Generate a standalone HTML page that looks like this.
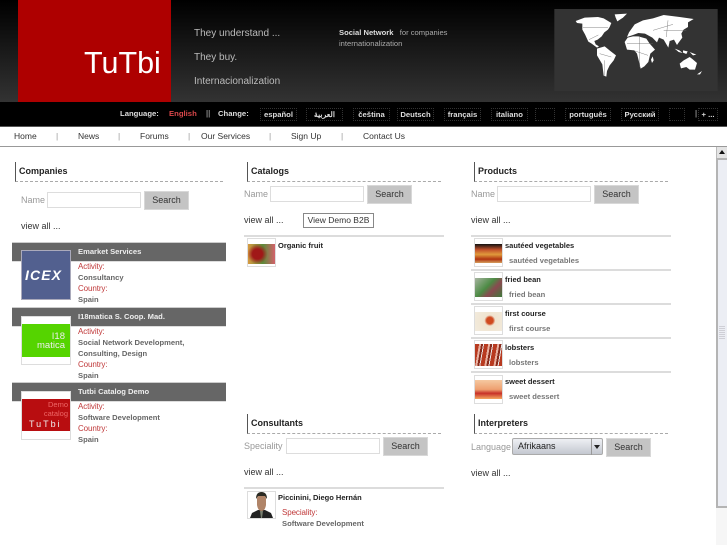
<!DOCTYPE html>
<html><head><meta charset="utf-8"><title>TuTbi</title>
<style>
html,body{margin:0;padding:0;width:727px;height:545px;overflow:hidden;background:#fff}
body{position:relative;font-family:"Liberation Sans","Noto Sans CJK SC",sans-serif;font-size:9px;color:#333;filter:blur(.3px)}
.a,.t{position:absolute}
.t{white-space:nowrap;line-height:12px}
.b{font-weight:bold}
.lang{position:absolute;top:108px;height:11px;border:1px dotted #333;color:#ddd;font-weight:bold;font-size:7.7px;line-height:11px;text-align:center}
.m{color:#333;font-size:8.5px}
.sep{color:#999;font-size:8.5px}
.h{position:absolute;height:19px;border-left:1px solid #555;border-bottom:1px dashed #aaa;font-weight:bold;color:#222;font-size:9px;line-height:18px;padding-left:3px;width:190px}
.g{color:#999;font-size:9px}
.in{position:absolute;height:14px;width:92px;border:1px solid #ddd;background:#fff}
.btn{position:absolute;width:43px;height:17px;background:#c4c4c4;border:1px solid #d8d8d8;color:#333;font-size:9px;line-height:17px;text-align:center}
.va{color:#333;font-size:9px}
.bar{position:absolute;height:20px;width:214px;left:12px;background:#666;border-top:1px solid #ccc;border-bottom:1px solid #ddd;box-sizing:border-box;color:#eee;font-weight:bold;font-size:7.6px;line-height:17px;padding-left:66px}
.r{color:#c0393a;font-size:8px;letter-spacing:-.1px}
.d{color:#666;font-weight:bold;font-size:7.6px}
.th{position:absolute;border:1px solid #ddd;background:#fff;box-sizing:border-box}
.hr{position:absolute;height:2px;background:#dcdcdc}
.pt{color:#222;font-weight:bold;font-size:7.5px}
.pd{color:#777;font-weight:bold;font-size:7.6px}
</style></head><body>

<div class="a" style="left:0;top:0;width:727px;height:102px;background:linear-gradient(#000,#0a0a0a 20%,#1c1c1c 55%,#333 100%)"></div>
<div class="a" style="left:18px;top:0;width:153px;height:102px;background:#ae0000"></div>
<div class="t" style="left:84px;top:44px;font-size:30.500px;line-height:38px;color:#fff">TuTbi</div>
<div class="t" style="left:194px;top:28px;font-size:10px;color:#bbb">They understand ...</div>
<div class="t" style="left:194px;top:52px;font-size:10px;color:#bbb">They buy.</div>
<div class="t" style="left:194px;top:76px;font-size:10px;color:#bbb">Internacionalization</div>
<div class="t" style="left:339px;top:27px;font-size:7.6px;color:#aaa"><b style="color:#ddd">Social Network</b> &nbsp; for companies</div>
<div class="t" style="left:339px;top:38px;font-size:7.6px;color:#aaa">internationalization</div>

<svg class="a" style="left:554px;top:9px" width="164" height="82" viewBox="44 26 490 246">
<rect x="44" y="26" width="490" height="246" fill="#333"/>
<g fill="#fff">
<path d="M108 62L135 52 175 50 192 54 215 68 210 80 205 88 194 96 186 108 174 118 164 122 168 132 178 138 172 142 156 130 146 124 136 102 128 88 128 70 112 68Z"/>
<path d="M225 42L262 40 250 52 233 63 228 52Z"/>
<path d="M172 145L195 138 212 152 229 165 222 180 210 195 202 212 200 229 192 226 188 192 172 165Z"/>
<path d="M255 125L264 112 280 108 296 108 320 115 330 130 346 148 332 160 326 185 314 198 303 205 297 180 292 160 284 150 262 148Z"/>
<path d="M262 110L268 96 285 72 310 60 340 54 372 44 420 50 462 56 445 66 445 80 432 88 425 100 428 112 416 128 412 134 403 118 390 122 386 142 372 118 358 112 352 126 338 112 316 100 296 98 280 104Z"/>
<path d="M420 190L432 180 450 170 458 176 472 188 466 208 450 208 440 200 424 204Z"/>
<path d="M405 145l14 5 10 8-12-3zM430 150l14 3-4 8-10-4zM450 155l20 8-10 2zM472 222l15-10-6 10zM334 178l5-10 3 12-5 8z"/>
</g>
<g stroke="#666" stroke-width="1.200" fill="none">
<path d="M130 82L205 82M148 118L176 104M180 160L215 170M195 180L195 226M262 130L340 130M300 110L300 200M280 150L325 165M372 90L440 90M340 90L400 72M380 110L385 60"/>
</g>
</svg>

<div class="a" style="left:0;top:102px;width:727px;height:24px;background:#000"></div>
<div class="t b" style="left:120px;top:108px;font-size:7.7px;color:#ddd">Language:</div>
<div class="t b" style="left:169px;top:108px;font-size:7.7px;color:#d9474a">English</div>
<div class="t" style="left:206px;top:108px;font-size:8px;color:#ccc">||</div>
<div class="t b" style="left:218px;top:108px;font-size:7.7px;color:#ddd">Change:</div>
<div class="lang" style="left:260px;width:35px">español</div>
<div class="lang" style="left:306px;width:35px">العربية</div>
<div class="lang" style="left:353px;width:35px">čeština</div>
<div class="lang" style="left:397px;width:35px">Deutsch</div>
<div class="lang" style="left:444px;width:35px">français</div>
<div class="lang" style="left:491px;width:35px">italiano</div>
<div class="lang" style="left:535px;width:18px"></div>
<div class="lang" style="left:565px;width:44px">português</div>
<div class="lang" style="left:621px;width:36px">Русский</div>
<div class="lang" style="left:669px;width:14px"></div>
<div class="t" style="left:695px;top:108px;font-size:8px;color:#ccc">|</div>
<div class="lang" style="left:698px;width:18px">+ ...</div>

<div class="a" style="left:0;top:126px;width:727px;height:21px;background:#fff;border-bottom:1px solid #999;border-top:1px solid #555;box-sizing:border-box"></div>
<div class="t m" style="left:14px;top:130px">Home</div>
<div class="t sep" style="left:56px;top:130px">|</div>
<div class="t m" style="left:78px;top:130px">News</div>
<div class="t sep" style="left:118px;top:130px">|</div>
<div class="t m" style="left:140px;top:130px">Forums</div>
<div class="t sep" style="left:188px;top:130px">|</div>
<div class="t m" style="left:201px;top:130px">Our Services</div>
<div class="t sep" style="left:269px;top:130px">|</div>
<div class="t m" style="left:291px;top:130px">Sign Up</div>
<div class="t sep" style="left:341px;top:130px">|</div>
<div class="t m" style="left:363px;top:130px">Contact Us</div>

<!-- scrollbar -->
<div class="a" style="left:716px;top:147px;width:11px;height:398px;background:#f6f6f6"></div>
<div class="a" style="left:716px;top:147px;width:11px;height:11px;background:#e4e4e4;border-left:1px solid #bbb;box-sizing:border-box"></div>
<div class="a" style="left:719px;top:150px;width:0;height:0;border-left:3px solid transparent;border-right:3px solid transparent;border-bottom:4px solid #111"></div>
<div class="a" style="left:716px;top:158px;width:11px;height:350px;background:#eceef4;border-left:2px solid #b4b4b4;border-top:2px solid #b4b4b4;border-bottom:2px solid #b4b4b4;box-sizing:border-box"></div>
<div class="a" style="left:719px;top:326px;width:6px;height:14px;background:repeating-linear-gradient(#cfcfd6 0 1px,transparent 1px 2px)"></div>

<!-- Companies -->
<div class="h" style="left:15px;top:162px;width:204px">Companies</div>
<div class="t g" style="left:21px;top:194px">Name</div>
<div class="in" style="left:47px;top:192px"></div>
<div class="btn" style="left:144px;top:191px">Search</div>
<div class="t va" style="left:21px;top:220px">view all ...</div>

<div class="bar" style="top:242px">Emarket Services</div>
<div class="th" style="left:21px;top:250px;width:50px;height:50px;background:#52608f;border-color:#aab"></div>
<div class="t b" style="left:25px;top:268px;font-size:14px;line-height:14px;color:#fff;font-style:italic;letter-spacing:1.100px">ICEX</div>
<div class="t r" style="left:78px;top:261px">Activity:</div>
<div class="t d" style="left:78px;top:272px">Consultancy</div>
<div class="t r" style="left:78px;top:283px">Country:</div>
<div class="t d" style="left:78px;top:294px">Spain</div>

<div class="bar" style="top:307px">I18matica S. Coop. Mad.</div>
<div class="th" style="left:21px;top:316px;width:50px;height:49px"></div>
<div class="a" style="left:22px;top:324px;width:48px;height:33px;background:#55d400"></div>
<div class="t" style="left:33px;top:333px;width:32px;text-align:right;font-size:9.500px;line-height:8.500px;color:#eee">I18<br>matica</div>
<div class="t r" style="left:78px;top:326px">Activity:</div>
<div class="t d" style="left:78px;top:337px">Social Network Development,</div>
<div class="t d" style="left:78px;top:348px">Consulting, Design</div>
<div class="t r" style="left:78px;top:359px">Country:</div>
<div class="t d" style="left:78px;top:370px">Spain</div>

<div class="bar" style="top:382px">Tutbi Catalog Demo</div>
<div class="th" style="left:21px;top:391px;width:50px;height:49px"></div>
<div class="a" style="left:22px;top:399px;width:48px;height:32px;background:#b80d10"></div>
<div class="t" style="left:38px;top:400px;width:30px;text-align:right;font-size:7.500px;line-height:9px;color:#e66">Demo<br>catalog</div>
<div class="t" style="left:29px;top:419px;font-size:9px;line-height:10px;color:#eee;letter-spacing:2px">TuTbi</div>
<div class="t r" style="left:78px;top:401px">Activity:</div>
<div class="t d" style="left:78px;top:412px">Software Development</div>
<div class="t r" style="left:78px;top:423px">Country:</div>
<div class="t d" style="left:78px;top:434px">Spain</div>

<!-- Catalogs -->
<div class="h" style="left:247px;top:162px">Catalogs</div>
<div class="t g" style="left:244px;top:188px">Name</div>
<div class="in" style="left:270px;top:186px"></div>
<div class="btn" style="left:367px;top:185px">Search</div>
<div class="t va" style="left:244px;top:214px">view all ...</div>
<div class="a" style="left:303px;top:213px;width:69px;height:13px;border:1px solid #888;font-size:8.5px;line-height:13px;text-align:center;color:#333">View Demo B2B</div>
<div class="hr" style="left:244px;top:235px;width:200px"></div>
<div class="th" style="left:247px;top:238px;width:29px;height:29px"></div>
<div class="a" style="left:248px;top:244px;width:27px;height:20px;background:radial-gradient(circle at 35% 50%,#a01818 0 25%,transparent 50%),linear-gradient(90deg,#d89a40,#5b8c3a 55%,#d4606a)"></div>
<div class="t pt" style="left:278px;top:240px">Organic fruit</div>

<!-- Products -->
<div class="h" style="left:474px;top:162px">Products</div>
<div class="t g" style="left:471px;top:188px">Name</div>
<div class="in" style="left:497px;top:186px"></div>
<div class="btn" style="left:594px;top:185px">Search</div>
<div class="t va" style="left:471px;top:214px">view all ...</div>

<div class="hr" style="left:471px;top:235px;width:200px"></div>
<div class="th" style="left:474px;top:238px;width:29px;height:29px"></div>
<div class="a" style="left:475px;top:244px;width:27px;height:19px;background:linear-gradient(#111 0,#c2502a 30%,#e09a3c 55%,#b03410 80%,#d6a060)"></div>
<div class="t pt" style="left:505px;top:240px">sautéed vegetables</div>
<div class="t pd" style="left:509px;top:255px">sautéed vegetables</div>

<div class="hr" style="left:471px;top:269px;width:200px"></div>
<div class="th" style="left:474px;top:272px;width:29px;height:29px"></div>
<div class="a" style="left:475px;top:278px;width:27px;height:19px;background:linear-gradient(135deg,#a7b4a0,#4c8a44 45%,#8a4a50 65%,#3f7a3a)"></div>
<div class="t pt" style="left:505px;top:274px">fried bean</div>
<div class="t pd" style="left:509px;top:289px">fried bean</div>

<div class="hr" style="left:471px;top:303px;width:200px"></div>
<div class="th" style="left:474px;top:306px;width:29px;height:29px"></div>
<div class="a" style="left:475px;top:312px;width:27px;height:19px;background:radial-gradient(circle at 55% 45%,#d04a20 0 18%,#f0e4d0 30%,#f2ebdd)"></div>
<div class="t pt" style="left:505px;top:308px">first course</div>
<div class="t pd" style="left:509px;top:323px">first course</div>

<div class="hr" style="left:471px;top:337px;width:200px"></div>
<div class="th" style="left:474px;top:340px;width:29px;height:29px"></div>
<div class="a" style="left:475px;top:344px;width:27px;height:22px;background:repeating-linear-gradient(100deg,#b83a20 0 4px,#e8b0a0 4px 6px,#8a2a1a 6px 8px,#e8e4e4 8px 9px)"></div>
<div class="t pt" style="left:505px;top:342px">lobsters</div>
<div class="t pd" style="left:509px;top:357px">lobsters</div>

<div class="hr" style="left:471px;top:371px;width:200px"></div>
<div class="th" style="left:474px;top:375px;width:29px;height:29px"></div>
<div class="a" style="left:475px;top:380px;width:27px;height:19px;background:linear-gradient(#f5c8a0,#eea070 50%,#c83028 70%,#f4a860)"></div>
<div class="t pt" style="left:505px;top:376px">sweet dessert</div>
<div class="t pd" style="left:509px;top:391px">sweet dessert</div>

<!-- Consultants -->
<div class="h" style="left:247px;top:414px">Consultants</div>
<div class="t g" style="left:244px;top:440px">Speciality</div>
<div class="in" style="left:286px;top:438px"></div>
<div class="btn" style="left:383px;top:437px">Search</div>
<div class="t va" style="left:244px;top:466px">view all ...</div>
<div class="hr" style="left:244px;top:487px;width:200px"></div>
<div class="th" style="left:247px;top:491px;width:29px;height:28px"></div>
<svg class="a" style="left:249px;top:492px" width="25" height="26" viewBox="0 0 25 26"><path d="M1 26L3 21 9 18H16L22 21 24 26Z" fill="#222"/><path d="M8 7Q8 2 12.500 2T17 7V13Q16 19 12.500 19T8 13Z" fill="#b08468"/><path d="M7 7Q7 0 12.500 0T18 7L16 4H9Z" fill="#2a2a22"/><path d="M11 19h3l-1 7h-1z" fill="#7a8070"/></svg>
<div class="t pt" style="left:278px;top:492px">Piccinini, Diego Hernán</div>
<div class="t r" style="left:282px;top:507px">Speciality:</div>
<div class="t pd" style="left:282px;top:518px;color:#666">Software Development</div>

<!-- Interpreters -->
<div class="h" style="left:474px;top:414px">Interpreters</div>
<div class="t g" style="left:471px;top:441px">Language</div>
<div class="a" style="left:512px;top:438px;width:91px;height:17px;border:1px solid #aaa;border-radius:2px;background:linear-gradient(#eef0f4,#c4c8d0);box-sizing:border-box;font-size:9px;line-height:15px;padding-left:5px;color:#222">Afrikaans</div>
<div class="a" style="left:591px;top:438px;width:1px;height:17px;background:#999"></div>
<div class="a" style="left:594px;top:445px;width:0;height:0;border-left:3px solid transparent;border-right:3px solid transparent;border-top:4px solid #222"></div>
<div class="btn" style="left:606px;top:438px">Search</div>
<div class="t va" style="left:471px;top:467px">view all ...</div>

</body></html>
